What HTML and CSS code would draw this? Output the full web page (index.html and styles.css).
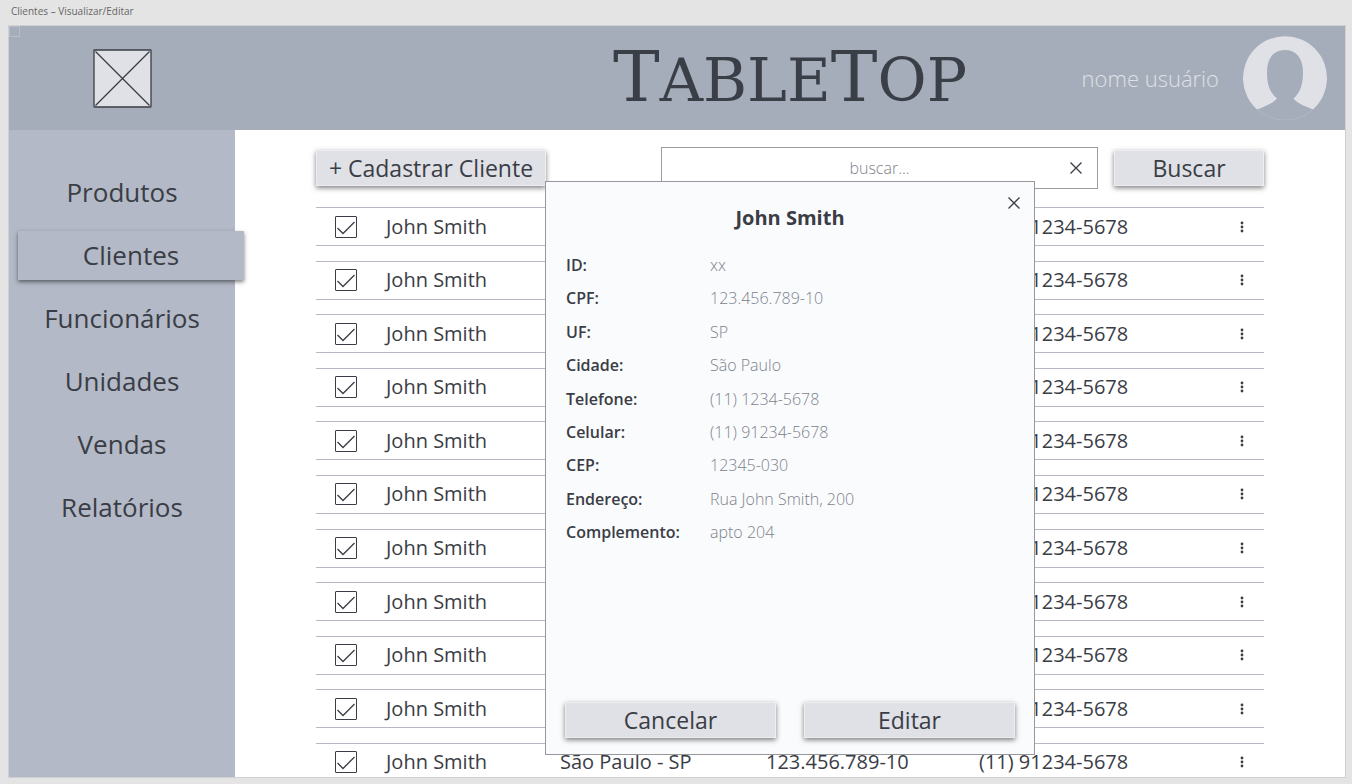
FILE: index.html
```html
<!DOCTYPE html>
<html lang="pt-BR">
<head>
  <meta charset="utf-8">
  <meta name="viewport" content="width=device-width, initial-scale=1">
  <title>Clientes – Visualizar/Editar</title>
  <link rel="stylesheet" href="styles.css">
</head>
<body class="page">
  <p class="page-label">Clientes – Visualizar/Editar</p>
  <div class="frame">
    <span class="corner-mark"></span>
    <header class="header">
      <div class="logo">
        <svg width="60" height="60" viewBox="0 0 60 60" fill="#dfe1e6" stroke="#3a3d45" stroke-width="1.3" aria-hidden="true">
          <rect x="2" y="2" width="57" height="57" rx="0.5"/>
          <path d="M3.500 3.500 57.500 57.500M57.500 3.500 3.500 57.500"/>
        </svg>
      </div>
      <h1 class="brand">T<span class="brand-small">ABLE</span>T<span class="brand-small">OP</span></h1>
      <div class="user">
        <span class="user-name">nome usuário</span>
        <svg width="84" height="84" viewBox="0 0 84 84" aria-hidden="true">
          <path fill="#dfe1e6" d="M14 73.500A42 42 0 1 1 70 73.500C62 70 55 68 50.500 62.500C58 56 60 47 60 36C60 22 53 14 42 14C31 14 24 22 24 36C24 47 26 56 34 62.500C29 68 22 70 14 73.500Z"/>
          <path fill="none" stroke="#b6bcc8" stroke-width="0.700" d="M14 73.500A42 42 0 0 0 70 73.500"/>
        </svg>
      </div>
    </header>
    <div class="body">
      <nav class="sidebar">
        <a class="nav-item" href="#">Produtos</a>
        <a class="nav-item nav-item-active" href="#" aria-current="page">Clientes</a>
        <a class="nav-item" href="#">Funcionários</a>
        <a class="nav-item" href="#">Unidades</a>
        <a class="nav-item" href="#">Vendas</a>
        <a class="nav-item" href="#">Relatórios</a>
      </nav>
      <main class="main">
        <div class="toolbar">
          <button class="button button-add" type="button">+ Cadastrar Cliente</button>
          <div class="search">
            <input class="search-input" type="text" placeholder="buscar..." aria-label="buscar">
            <button class="icon-button search-clear" type="button" aria-label="Limpar">
              <svg width="14" height="14" viewBox="0 0 14 14" stroke="#3a3d45" stroke-width="1.300"><path d="M1.500 1.500 12.500 12.500M12.500 1.500 1.500 12.500"/></svg>
            </button>
          </div>
          <button class="button button-search" type="button">Buscar</button>
        </div>
        <table class="clients">
          <tbody class="clients-body" id="clients"></tbody>
        </table>
        <section class="modal" role="dialog" aria-labelledby="modal-title">
          <button class="icon-button modal-close" type="button" aria-label="Fechar">
            <svg width="14" height="14" viewBox="0 0 14 14" stroke="#3a3d45" stroke-width="1.300"><path d="M1.500 1.500 12.500 12.500M12.500 1.500 1.500 12.500"/></svg>
          </button>
          <h2 class="modal-title" id="modal-title">John Smith</h2>
          <dl class="details">
            <dt>ID:</dt><dd>xx</dd>
            <dt>CPF:</dt><dd>123.456.789-10</dd>
            <dt>UF:</dt><dd>SP</dd>
            <dt>Cidade:</dt><dd>São Paulo</dd>
            <dt>Telefone:</dt><dd>(11) 1234-5678</dd>
            <dt>Celular:</dt><dd>(11) 91234-5678</dd>
            <dt>CEP:</dt><dd>12345-030</dd>
            <dt>Endereço:</dt><dd>Rua John Smith, 200</dd>
            <dt>Complemento:</dt><dd>apto 204</dd>
          </dl>
          <div class="modal-actions">
            <button class="button" type="button">Cancelar</button>
            <button class="button" type="button">Editar</button>
          </div>
        </section>
      </main>
    </div>
  </div>
  <script src="app.js"></script>
</body>
</html>
```

FILE: styles.css
```css
* {
  box-sizing: border-box;
}

.page {
  display: flex;
  flex-direction: column;
  height: 100vh;
  margin: 0;
  padding: 0 6px 6px 8px;
  overflow: hidden;
  background: #e4e4e4;
  color: #3a3d45;
  font-family: "Open Sans", "Noto Sans", sans-serif;
}

.page-label {
  margin: 0;
  padding: 3px 3px 6px;
  color: #666;
  font-size: 10px;
  line-height: 16px;
}

.frame {
  position: relative;
  display: flex;
  flex: 1;
  flex-direction: column;
  min-height: 0;
  overflow: hidden;
  border: 1px solid #cfd0d2;
  background: #fff;
}

.corner-mark {
  position: absolute;
  top: 0;
  left: 0;
  width: 11px;
  height: 11px;
  border: 1px solid #b6bcc8;
}

.header {
  display: grid;
  grid-template-columns: 226px 1fr auto 1fr;
  align-items: center;
  height: 104px;
  flex-shrink: 0;
  background: #a6adba;
}

.logo {
  display: flex;
  justify-content: center;
}

.brand {
  grid-column: 3;
  margin: 0;
  color: #3a3e47;
  font-family: "DejaVu Serif", serif;
  font-size: 70px;
  font-weight: 400;
  line-height: 80px;
}

.brand-small {
  font-size: 60px;
}

.user {
  display: flex;
  align-items: center;
  justify-content: flex-end;
  gap: 24px;
  padding-right: 18px;
}

.user-name {
  color: #dfe1e6;
  font-size: 22px;
  font-weight: 300;
  white-space: nowrap;
}

.body {
  display: flex;
  flex: 1;
  min-height: 0;
}

.sidebar {
  z-index: 1;
  display: flex;
  flex: 0 0 226px;
  flex-direction: column;
  gap: 14px;
  padding-top: 38px;
  background: #b3b9c6;
}

.nav-item {
  display: flex;
  align-items: center;
  justify-content: center;
  height: 49px;
  padding-bottom: 1px;
  color: #3a3d45;
  font-size: 26px;
  text-decoration: none;
}

.nav-item-active {
  margin: 0 -9px 0 9px;
  background: #b3b9c6;
  box-shadow: 0 2px 4px rgba(0, 0, 0, 0.5);
}

.main {
  position: relative;
  flex: 1;
  min-width: 0;
  padding: 17px 81px 0;
}

.toolbar {
  display: flex;
  align-items: center;
  gap: 16px;
}

.button {
  height: 36px;
  padding: 0;
  border: 1px solid #eceef0;
  background: #dfe1e6;
  box-shadow: 0 2px 5px rgba(0, 0, 0, 0.5);
  color: #3a3d45;
  font-family: inherit;
  font-size: 23px;
  line-height: 32px;
  white-space: nowrap;
}

.button-add {
  flex: 0 0 230px;
  margin-right: 99px;
}

.button-search {
  flex: 0 0 150px;
}

.search {
  display: flex;
  flex: 1;
  min-width: 0;
  height: 42px;
  padding-left: 42px;
  border: 1px solid #999ca1;
  background: #fff;
}

.search-input {
  flex: 1;
  min-width: 0;
  padding: 0;
  border: 0;
  outline: 0;
  background: none;
  color: #3a3d45;
  font-family: inherit;
  font-size: 16px;
  font-weight: 300;
  text-align: center;
}

.search-input::placeholder {
  color: #7d828c;
}

.icon-button {
  display: grid;
  place-items: center;
  padding: 0;
  border: 0;
  background: none;
}

.search-clear {
  width: 42px;
}

.clients {
  display: block;
  margin-top: 18px;
}

.clients-body {
  display: grid;
  align-content: space-between;
  height: 575px;
}

.client {
  display: grid;
  grid-template-columns: 70px 174fr 206fr 213fr 240fr 45px;
  align-items: center;
  height: 39px;
  border: solid #b6b9c3;
  border-width: 1px 0;
  font-size: 20px;
  line-height: 28px;
  white-space: nowrap;
}

.client-cell {
  padding: 0;
}

.client-check {
  display: flex;
  padding-left: 19px;
}

.checkbox {
  width: 22px;
  height: 22px;
  margin: 0;
  border: 1px solid #3a3d45;
  border-radius: 1px;
  appearance: none;
}

.checkbox:checked {
  background: url("data:image/svg+xml,%3Csvg xmlns='http://www.w3.org/2000/svg' viewBox='0 0 20 20' fill='none' stroke='%233a3d45' stroke-width='1.3'%3E%3Cpath d='M1.500 11 7 16.500 18.500 5'/%3E%3C/svg%3E") center / 20px 20px;
}

.client-menu {
  width: 45px;
  height: 30px;
}

.modal {
  position: absolute;
  inset: 51px 0 22px;
  display: flex;
  flex-direction: column;
  width: 490px;
  margin: 0 auto;
  padding: 20px 19px 16px;
  border: 1px solid #96989d;
  background: #fafbfd;
}

.modal-close {
  position: absolute;
  top: 6px;
  right: 5px;
  width: 30px;
  height: 30px;
}

.modal-title {
  margin: 0;
  font-size: 20px;
  line-height: 32px;
  text-align: center;
}

.details {
  display: grid;
  grid-template-columns: 144px 1fr;
  align-content: space-between;
  height: 291px;
  margin: 19px 0 0;
  padding-left: 1px;
  font-size: 16px;
  line-height: 24px;
}

.details dt {
  font-weight: 600;
}

.details dd {
  margin: 0;
  color: #7d828c;
  font-weight: 300;
}

.modal-actions {
  display: grid;
  grid-template-columns: 1fr 1fr;
  gap: 28px;
  margin-top: auto;
}
```

FILE: app.js
```js
const clients = Array.from({ length: 11 }, () => ({
  name: "John Smith",
  city: "São Paulo - SP",
  cpf: "123.456.789-10",
  phone: "(11) 91234-5678",
}));

document.getElementById("clients").innerHTML = clients
  .map(
    (client) => `
    <tr class="client">
      <td class="client-cell client-check"><input class="checkbox" type="checkbox" checked aria-label="Selecionar ${client.name}"></td>
      <td class="client-cell">${client.name}</td>
      <td class="client-cell">${client.city}</td>
      <td class="client-cell">${client.cpf}</td>
      <td class="client-cell">${client.phone}</td>
      <td class="client-cell">
        <button class="icon-button client-menu" type="button" aria-label="Opções">
          <svg width="4" height="12" viewBox="0 0 4 12" fill="#3a3d45"><circle cx="2" cy="2" r="1.400"/><circle cx="2" cy="6" r="1.400"/><circle cx="2" cy="10" r="1.400"/></svg>
        </button>
      </td>
    </tr>`
  )
  .join("");
```
